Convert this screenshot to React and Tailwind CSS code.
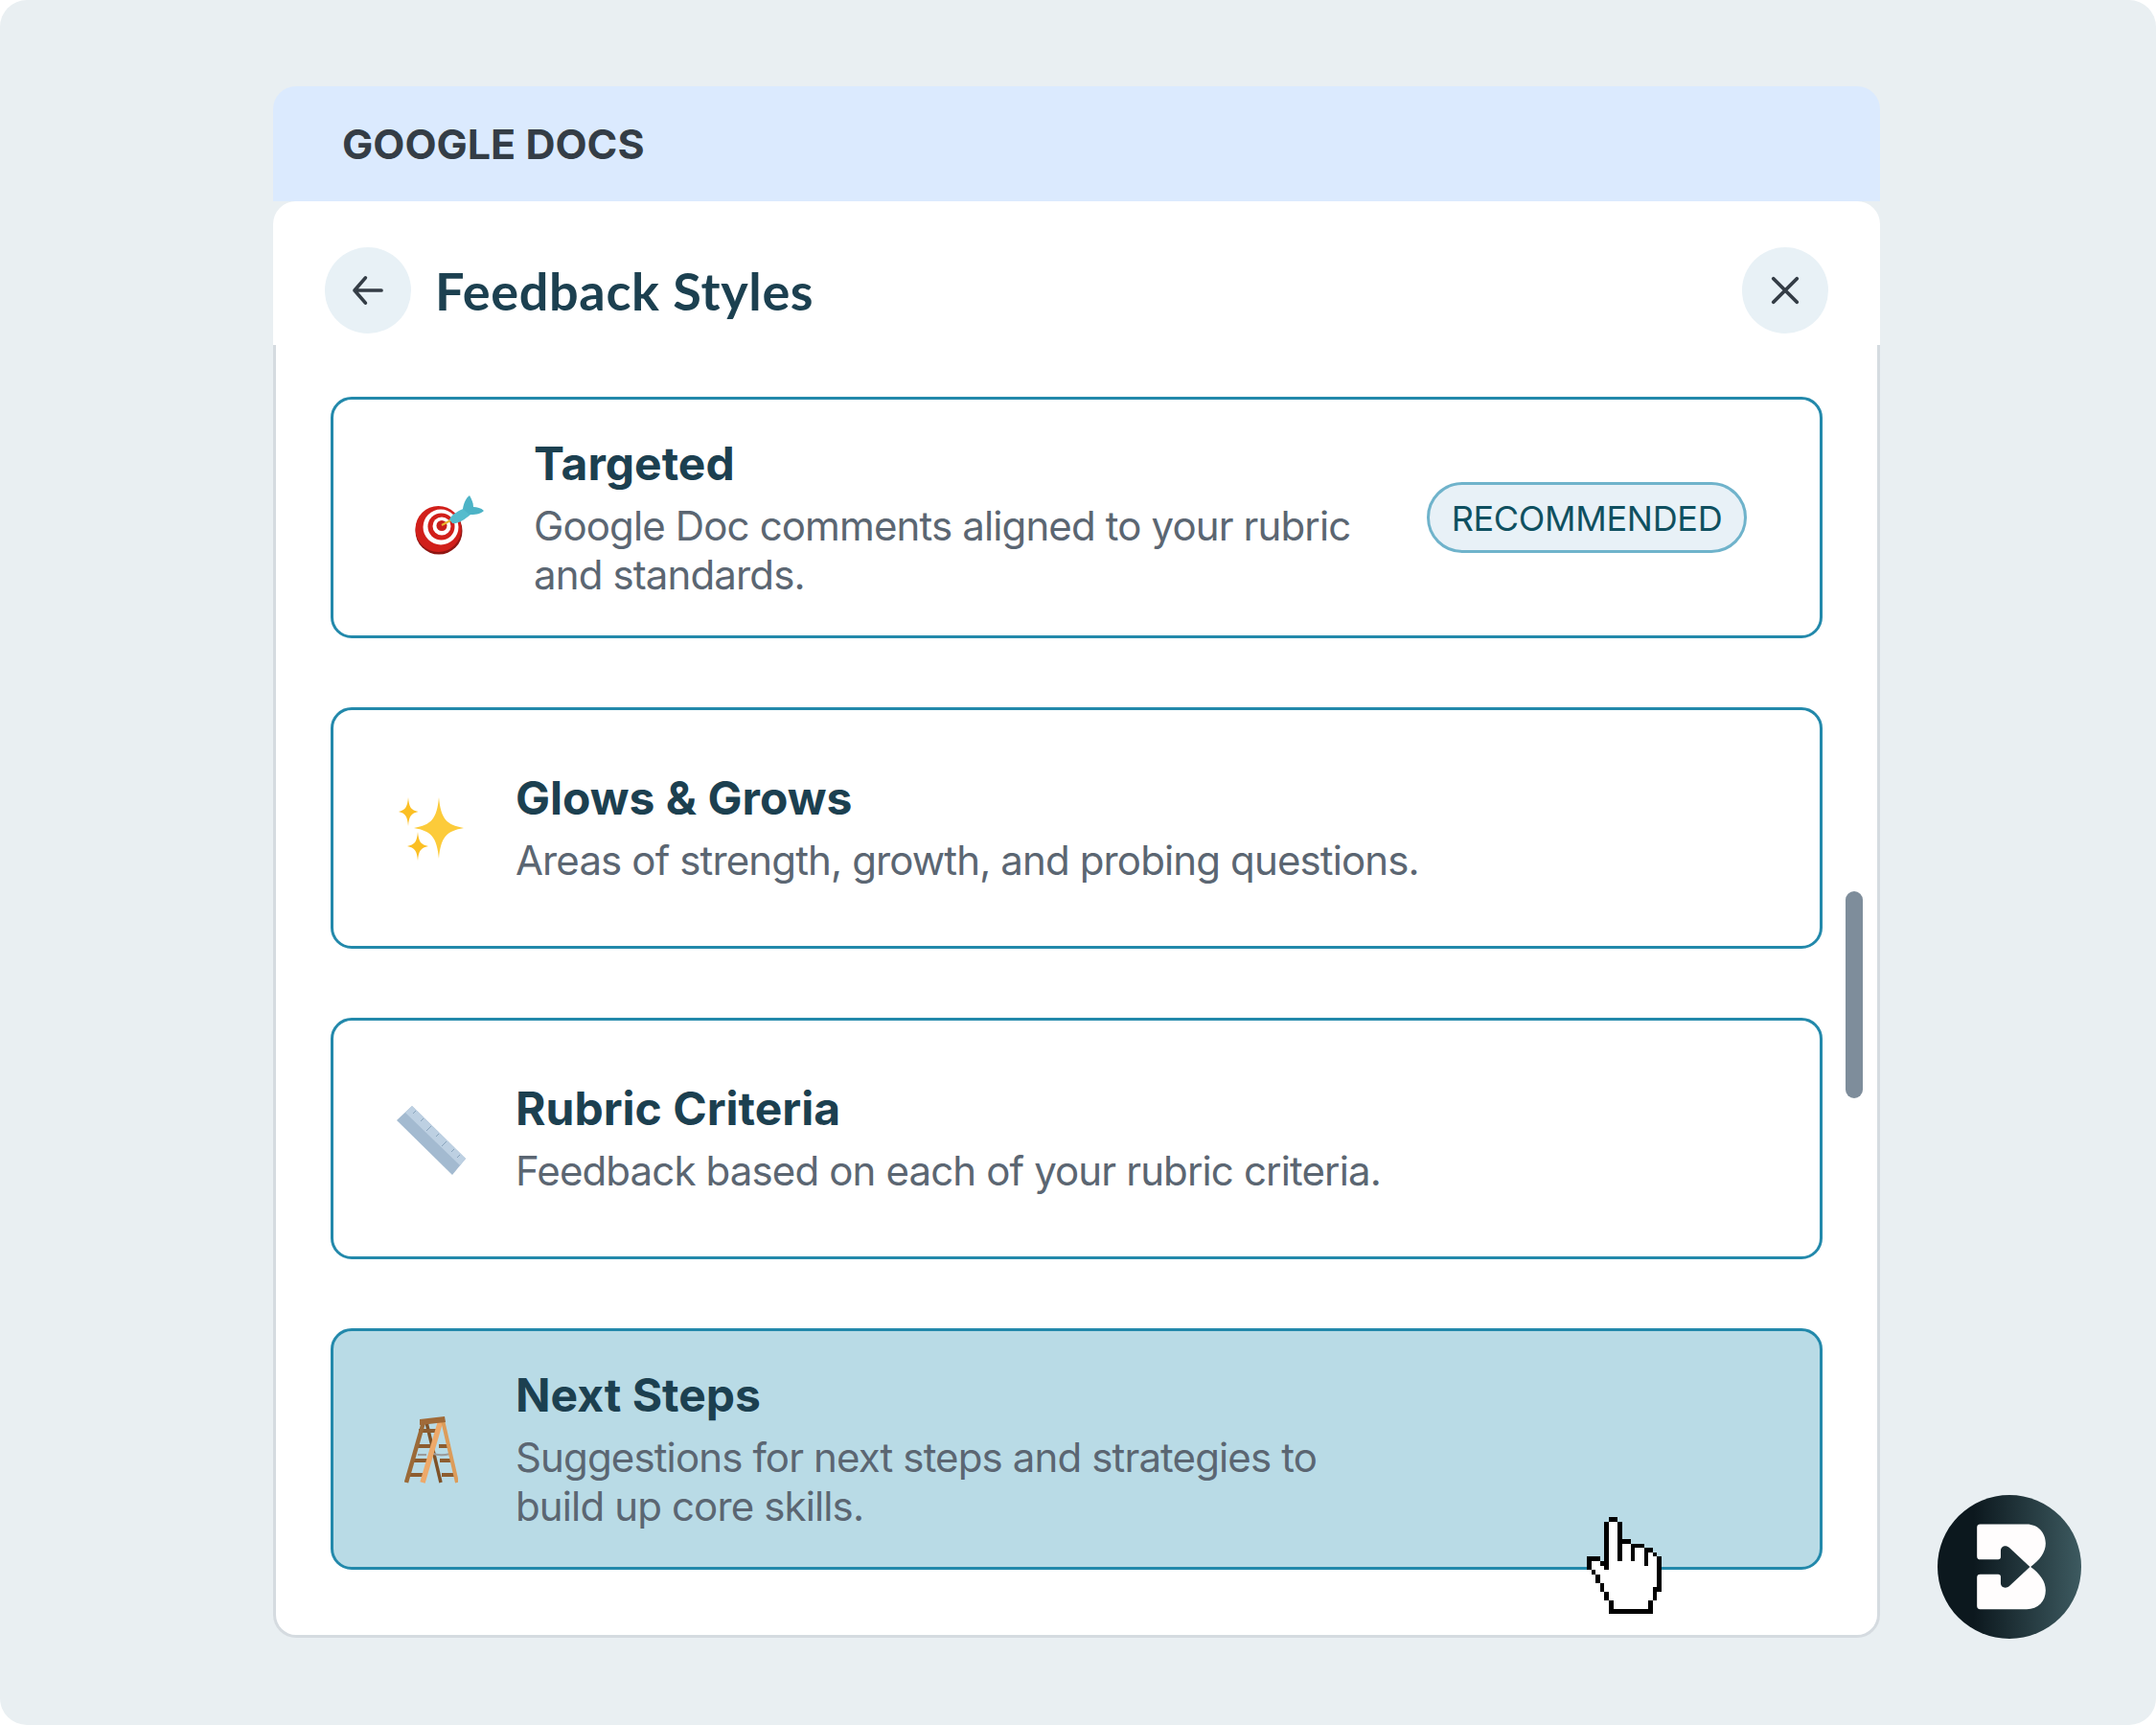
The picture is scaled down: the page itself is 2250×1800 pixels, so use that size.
const CURSOR_RECTS = [
  [5, 0, 2, 1], [4, 1, 1, 11], [7, 1, 1, 9], [8, 5, 2, 1], [10, 6, 3, 1], [10, 6, 1, 4],
  [13, 7, 2, 1], [13, 7, 1, 4], [15, 8, 1, 1], [16, 9, 1, 8], [15, 16, 1, 3], [14, 19, 1, 3],
  [5, 21, 10, 1], [5, 19, 1, 3], [4, 17, 1, 2], [3, 15, 1, 2], [2, 13, 1, 2], [1, 12, 1, 1],
  [0, 9, 3, 1], [0, 9, 1, 3], [3, 10, 1, 1],
];

function TargetIcon() {
  return (
    <svg viewBox="0 0 72 62" className="w-[72px] h-[62px] mt-[15px]">
      <ellipse cx="25" cy="37" rx="24.5" ry="24.5" fill="#8f1512" />
      <ellipse cx="24.5" cy="35" rx="24" ry="24" fill="#d11f1a" />
      <ellipse cx="27" cy="33" rx="18.5" ry="18.5" fill="#fff" />
      <ellipse cx="27.5" cy="32.5" rx="14" ry="14" fill="#d11f1a" />
      <ellipse cx="28" cy="32" rx="9.5" ry="9.5" fill="#fff" />
      <ellipse cx="28" cy="31.5" rx="5.5" ry="5.5" fill="#c81e1a" />
      <path d="M28 31L39 25" stroke="#e9b52c" strokeWidth="2" />
      <path d="M36 25C39 19 46 16 52 13L58 20C52 25 45 30 39 29Z" fill="#55bccd" />
      <path d="M50 14C51 8 53 3 57 0C59 4 61 7 61 12C65 12 69 13 72 16C68 20 62 20 57 20Z" fill="#4cb3c6" />
    </svg>
  );
}

function SparklesIcon() {
  const star = "M0 -1C.08 -.3 .3 -.1 1 0C.3 .1 .08 .3 0 1C-.08 .3 -.3 .1 -1 0C-.3 -.1 -.08 -.3 0 -1Z";
  return (
    <svg viewBox="0 0 68 66" className="w-[68px] h-[66px] mt-[2px]">
      <path d={star} transform="translate(10 15) scale(10.5 15)" fill="#fbbf24" />
      <path d={star} transform="translate(20 51) scale(11 15)" fill="#fbbf24" />
      <path d={star} transform="translate(42 32) scale(26 32)" fill="#fccb3a" />
    </svg>
  );
}

function RulerIcon() {
  return (
    <svg viewBox="0 0 72 74" className="w-[72px] h-[74px] mt-[6px]">
      <path d="M16 0L72 55L58 72L0 15Z" fill="#a3bad0" />
      <path d="M16 0L72 55L66 62L9 7Z" fill="#bdd0e2" />
      <path d="M20 5L17 8M28 13L25 16M36 21L31 26M44 29L41 32M52 37L47 42M60 45L57 48M66 51L63 54" stroke="#8aa4bc" strokeWidth="1" />
    </svg>
  );
}

function LadderIcon() {
  return (
    <svg viewBox="0 0 56 70" className="w-[56px] h-[70px] mt-[2px]">
      <path d="M23 6L38 69" stroke="#7e5228" strokeWidth="3.5" />
      <path d="M15 15H33M11 31H29M7 46H25M3 61H20M36 31H48M37 46H51M39 61H53" stroke="#8d5d30" strokeWidth="4" />
      <path d="M14 40H23M28 38C34 41 40 41 48 39" stroke="#9a9a9a" strokeWidth="2" fill="none" />
      <path d="M20 6L2 69" stroke="#9b6a38" strokeWidth="4.5" />
      <path d="M38 4L19 69" stroke="#eda96a" strokeWidth="5.5" />
      <path d="M40 4L55 69" stroke="#dc9c5a" strokeWidth="4" />
      <path d="M16 3L42 0L43 6L16 9Z" fill="#a06a38" />
    </svg>
  );
}

function HandCursor() {
  return (
    <svg viewBox="0 0 17 22" shapeRendering="crispEdges" className="absolute left-[1656px] top-[1583px] w-[78px] h-[101px]">
      <path d="M5 1H7V6H10V7H13V8H15V9H16V17H15V19H14V21H5V19H4V17H3V15H2V13H1V12L1 10H3V11H5Z" fill="#fff" />
      {CURSOR_RECTS.map(([x, y, w, h], i) => (
        <rect key={i} x={x} y={y} width={w} height={h} fill="#000" />
      ))}
    </svg>
  );
}

function BrandLogo() {
  return (
    <svg viewBox="67 61 448 448" className="absolute left-[2022px] top-[1560px] w-[150px] h-[150px]">
      <defs>
        <linearGradient id="brand-bg" x1="0" y1="0" x2="1" y2="0">
          <stop offset="0.25" stopColor="#0c181e" />
          <stop offset="1" stopColor="#3d5a60" />
        </linearGradient>
      </defs>
      <circle cx="291" cy="285" r="224" fill="url(#brand-bg)" />
      <path
        d="M200 152H345C380 152 404 178 404 212C404 240 385 265 357 285C385 305 404 330 404 358C404 392 380 417 345 417H200Q190 417 190 407V318Q190 308 200 308H256Q264 308 264 316V335C264 350 280 354 291 345L355 285L291 225C280 216 264 220 264 235V254Q264 262 256 262H200Q190 262 190 252V162Q190 152 200 152Z"
        fill="#fffdfd"
      />
    </svg>
  );
}

function StyleCard({ icon, title, lines, selected, badge }) {
  return (
    <div
      className={`h-[252px] border-[3px] border-[#2389ab] rounded-[22px] flex items-center ${badge ? "pl-[85px] pr-[76px]" : "pl-[66px]"} ${selected ? "bg-[#b9dbe6]" : "bg-white"}`}
    >
      <div className="w-[72px] flex justify-center shrink-0">{icon}</div>
      <div className="flex-1 ml-[52px]">
        <div className="text-[48px] leading-[56px] font-bold text-[#1c4050]">{title}</div>
        <div className="mt-[11px] text-[42px] leading-[51px] tracking-[-0.87px] text-[#5b6672]">
          {lines.map((l) => (
            <div key={l}>{l}</div>
          ))}
        </div>
      </div>
      {badge && (
        <div className="h-[74px] w-[334px] shrink-0 rounded-full border-[3px] border-[#6fb3cb] bg-[#e8f1f7] flex items-center justify-center pt-[1px] text-[36px] tracking-[-0.3px] text-[#0f5060]">
          {badge}
        </div>
      )}
    </div>
  );
}

export default function App() {
  return (
    <div className="relative w-[2250px] h-[1800px] bg-white font-['Inter',sans-serif] overflow-hidden">
      <div className="w-full h-full bg-[#e9eff2] rounded-[28px] pt-[90px] pl-[285px]">
        <div className="w-[1677px]">
          <div className="h-[120px] bg-[#dbeafe] rounded-t-[24px] flex items-center pl-[72px]">
            <span className="text-[43px] font-bold text-[#343d46]">GOOGLE DOCS</span>
          </div>
          <div className="h-[150px] bg-white rounded-t-[24px] flex items-start justify-between px-[54px] pt-[48px]">
            <div className="flex items-center gap-[25px]">
              <button className="w-[90px] h-[90px] rounded-full bg-[#e8f1f6] flex items-center justify-center">
                <svg viewBox="0 0 24 24" className="w-[42px] h-[42px]" fill="none" stroke="#343d46" strokeWidth="2.1" strokeLinecap="round" strokeLinejoin="round">
                  <path d="M20 12H4M10.5 4.5L4 12L10.5 19.5" />
                </svg>
              </button>
              <span className="font-['Lato',sans-serif] text-[54px] font-bold tracking-[0.65px] text-[#1c4050]">Feedback Styles</span>
            </div>
            <button className="w-[90px] h-[90px] rounded-full bg-[#e8f1f6] flex items-center justify-center">
              <svg viewBox="0 0 24 24" className="w-[42px] h-[42px]" fill="none" stroke="#343d46" strokeWidth="2.2" strokeLinecap="round">
                <path d="M5 5L19 19M19 5L5 19" />
              </svg>
            </button>
          </div>
          <div className="h-[1349px] bg-white border-x-[3px] border-b-[3px] border-[#d5dbe0] rounded-b-[24px] pt-[54px] px-[57px] flex flex-col gap-[72px]">
            <StyleCard
              icon={<TargetIcon />}
              title="Targeted"
              lines={["Google Doc comments aligned to your rubric", "and standards."]}
              badge="RECOMMENDED"
            />
            <StyleCard icon={<SparklesIcon />} title="Glows & Grows" lines={["Areas of strength, growth, and probing questions."]} />
            <StyleCard icon={<RulerIcon />} title="Rubric Criteria" lines={["Feedback based on each of your rubric criteria."]} />
            <StyleCard
              icon={<LadderIcon />}
              title="Next Steps"
              lines={["Suggestions for next steps and strategies to", "build up core skills."]}
              selected
            />
          </div>
        </div>
      </div>
      <div className="absolute left-[1926px] top-[930px] w-[18px] h-[216px] rounded-full bg-[#7e8d9b]" />
      <HandCursor />
      <BrandLogo />
    </div>
  );
}
